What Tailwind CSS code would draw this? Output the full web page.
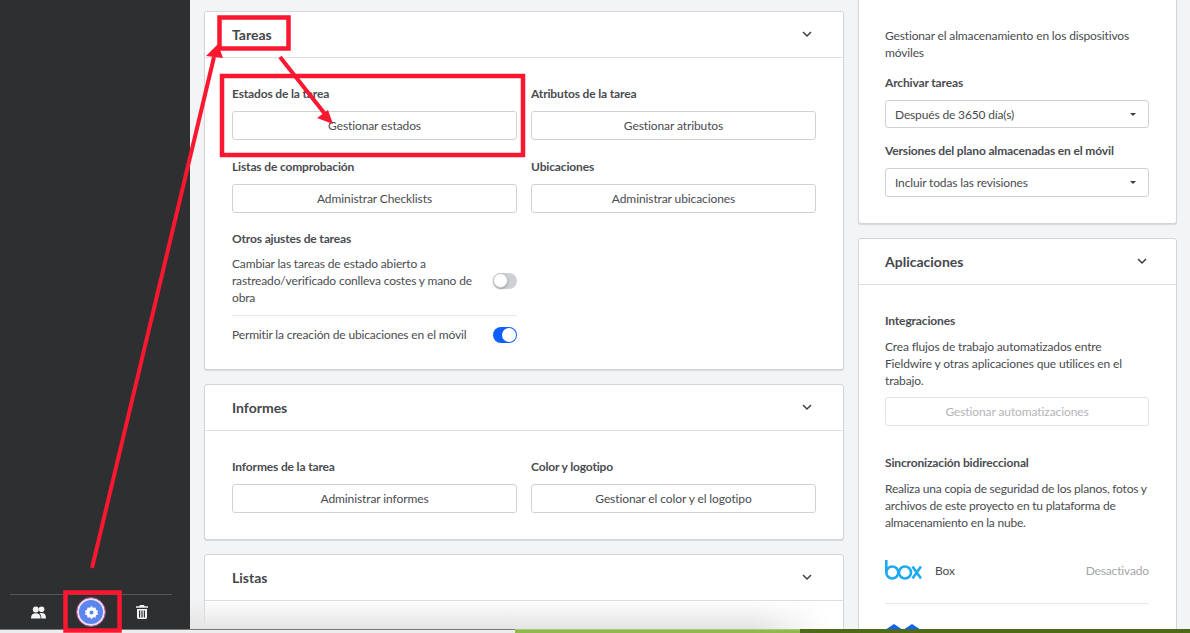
<!DOCTYPE html>
<html lang="en">
<head>
    <meta charset="UTF-8">
    <meta name="viewport" content="width=device-width, initial-scale=1.0">
    <title>Ajustes del proyecto</title>
    <script src="https://cdn.jsdelivr.net/npm/@tailwindcss/browser@4"></script>
</head>
<body class="relative w-[1190px] h-[633px] overflow-hidden bg-[#f3f4f6] font-['Lato',sans-serif] text-[12px] leading-[17px] tracking-[-0.15px] text-[#4a4c50]">
    <div class="flex h-[633px]">
        <!-- Sidebar -->
        <aside class="w-[190px] h-full shrink-0 bg-[#2e2f31] flex flex-col justify-end pl-[10px] pr-[18px] pb-[4px]">
            <div class="border-t border-[#55575a] h-[35px] flex items-center text-white">
                <div class="w-[56px] flex justify-center">
                    <svg class="w-[15px] h-[13px]" viewBox="0 0 15 13" fill="#f4f4f4"><circle cx="4.800" cy="3.600" r="3"/><circle cx="10.600" cy="3.200" r="2.800"/><path d="M0 12.500c0-3.600 1.600-5.200 4.800-5.200s4.800 1.600 4.800 5.200z"/><path d="M10.400 12.500c0-2.200-.5-3.900-1.800-5 .6-.3 1.300-.4 2-.4 3 0 4.400 1.800 4.400 5.400z"/></svg>
                </div>
                <div class="w-[28px] h-[28px] ml-[11px] rounded-full bg-[#5b86ee] border-2 border-[#e6e4f2] outline outline-1 outline-[#c04a98] flex items-center justify-center">
                    <svg class="w-[15px] h-[15px]" viewBox="0 0 24 24" fill="#fff"><path d="M12 1l2.200 3.400 4-.6 1 3.900 3.600 1.700L21 12l1.800 2.600-3.600 1.700-1 3.900-4-.6L12 23l-2.200-3.400-4 .6-1-3.900-3.600-1.700L3 12 1.200 9.400l3.600-1.700 1-3.900 4 .6z"/><circle cx="12" cy="12" r="3.200" fill="#5b86ee"/></svg>
                </div>
                <div class="ml-[31px]">
                    <svg class="w-[12px] h-[14px]" viewBox="0 0 12 14" fill="#f4f4f4"><path d="M4 0h4l.6 1.200H12v1.600H0V1.200h3.400z"/><path d="M1 4h10v8.600c0 .8-.6 1.400-1.400 1.400H2.400C1.600 14 1 13.400 1 12.600zM3 5.500v7h1.200v-7zm2.400 0v7h1.200v-7zm2.400 0v7H9v-7z" fill-rule="evenodd"/></svg>
                </div>
            </div>
        </aside>

        <!-- Left column -->
        <main class="w-[640px] ml-[14px] pt-[11px] flex flex-col gap-[14px] shrink-0">
            <section class="h-[359px] shrink-0 bg-white border border-[#d3d5d8] rounded-[3px] shadow-[0_1px_1px_rgba(0,0,0,0.12)]">
                <header class="h-[46px] px-[27px] border-b border-[#dcdee0] flex items-center justify-between">
                    <h2 class="text-[14px] font-bold tracking-normal text-[#45474b]">Tareas</h2>
                    <svg class="w-[10px] h-[7px] mr-[4px]" viewBox="0 0 10 7" fill="none" stroke="#3c3e42" stroke-width="1.500"><path d="M1 1l4 4 4-4"/></svg>
                </header>
                <div class="px-[27px] pt-[27px]">
                    <div class="grid grid-cols-[285px_285px] gap-x-[14px] gap-y-[18px]">
                        <div>
                            <p class="font-bold mb-[9px]">Estados de la tarea</p>
                            <button class="w-full h-[29px] border border-[#cfd1d4] rounded-[3px] bg-white tracking-[-0.1px]">Gestionar estados</button>
                        </div>
                        <div>
                            <p class="font-bold mb-[9px]">Atributos de la tarea</p>
                            <button class="w-full h-[29px] border border-[#cfd1d4] rounded-[3px] bg-white tracking-[-0.1px]">Gestionar atributos</button>
                        </div>
                        <div>
                            <p class="font-bold mb-[9px]">Listas de comprobación</p>
                            <button class="w-full h-[29px] border border-[#cfd1d4] rounded-[3px] bg-white tracking-[-0.1px]">Administrar Checklists</button>
                        </div>
                        <div>
                            <p class="font-bold mb-[9px]">Ubicaciones</p>
                            <button class="w-full h-[29px] border border-[#cfd1d4] rounded-[3px] bg-white tracking-[-0.1px]">Administrar ubicaciones</button>
                        </div>
                    </div>
                    <div class="w-[285px] mt-[17px]">
                        <p class="font-bold mb-[8px]">Otros ajustes de tareas</p>
                        <div class="flex items-center justify-between pb-[9px] border-b border-[#e6e7e9]">
                            <p class="w-[245px]">Cambiar las tareas de estado abierto a rastreado/verificado conlleva costes y mano de obra</p>
                            <span class="w-[24px] h-[16px] rounded-full bg-[#cfd0d3] relative">
                                <span class="absolute left-0 top-0 w-[15px] h-[15px] rounded-full bg-white border border-[#c4c5c8] shadow-[0_1px_2px_rgba(0,0,0,0.25)]"></span>
                            </span>
                        </div>
                        <div class="flex items-center justify-between pt-[10px]">
                            <p>Permitir la creación de ubicaciones en el móvil</p>
                            <span class="w-[24px] h-[16px] rounded-full bg-[#0f5fff] relative">
                                <span class="absolute right-[1px] top-[1px] w-[14px] h-[14px] rounded-full bg-white"></span>
                            </span>
                        </div>
                    </div>
                </div>
            </section>

            <section class="h-[156px] shrink-0 bg-white border border-[#d3d5d8] rounded-[3px] shadow-[0_1px_1px_rgba(0,0,0,0.12)]">
                <header class="h-[46px] px-[27px] border-b border-[#dcdee0] flex items-center justify-between">
                    <h2 class="text-[14px] font-bold tracking-normal text-[#45474b]">Informes</h2>
                    <svg class="w-[10px] h-[7px] mr-[4px]" viewBox="0 0 10 7" fill="none" stroke="#3c3e42" stroke-width="1.500"><path d="M1 1l4 4 4-4"/></svg>
                </header>
                <div class="px-[27px] pt-[27px] grid grid-cols-[285px_285px] gap-x-[14px]">
                    <div>
                        <p class="font-bold mb-[9px]">Informes de la tarea</p>
                        <button class="w-full h-[29px] border border-[#cfd1d4] rounded-[3px] bg-white tracking-[-0.1px]">Administrar informes</button>
                    </div>
                    <div>
                        <p class="font-bold mb-[9px]">Color y logotipo</p>
                        <button class="w-full h-[29px] border border-[#cfd1d4] rounded-[3px] bg-white tracking-[-0.1px]">Gestionar el color y el logotipo</button>
                    </div>
                </div>
            </section>

            <section class="h-[100px] shrink-0 bg-white border border-[#d3d5d8] rounded-[3px]">
                <header class="h-[46px] px-[27px] border-b border-[#dcdee0] flex items-center justify-between">
                    <h2 class="text-[14px] font-bold tracking-normal text-[#45474b]">Listas</h2>
                    <svg class="w-[10px] h-[7px] mr-[4px]" viewBox="0 0 10 7" fill="none" stroke="#3c3e42" stroke-width="1.500"><path d="M1 1l4 4 4-4"/></svg>
                </header>
            </section>
        </main>

        <!-- Right column -->
        <div class="w-[319px] ml-[14px] flex flex-col gap-[14px] shrink-0">
            <section class="h-[224px] shrink-0 bg-white border border-t-0 border-[#d3d5d8] rounded-b-[3px] shadow-[0_1px_1px_rgba(0,0,0,0.12)] px-[26px] pt-[27px]">
                <p class="w-[264px]">Gestionar el almacenamiento en los dispositivos móviles</p>
                <p class="font-bold mt-[13px] mb-[9px]">Archivar tareas</p>
                <div class="w-[264px] h-[28px] border border-[#cfd1d4] rounded-[3px] flex items-center justify-between pl-[9px] pr-[12px]">
                    <span>Después de 3650 día(s)</span>
                    <span class="border-x-[3px] border-x-transparent border-t-[3px] border-t-[#3c3e42]"></span>
                </div>
                <p class="font-bold mt-[14px] mb-[9px]">Versiones del plano almacenadas en el móvil</p>
                <div class="w-[264px] h-[29px] border border-[#cfd1d4] rounded-[3px] flex items-center justify-between pl-[9px] pr-[12px]">
                    <span>Incluir todas las revisiones</span>
                    <span class="border-x-[3px] border-x-transparent border-t-[3px] border-t-[#3c3e42]"></span>
                </div>
            </section>

            <section class="h-[420px] shrink-0 bg-white border border-[#d3d5d8] rounded-[3px]">
                <header class="h-[46px] px-[26px] border-b border-[#dcdee0] flex items-center justify-between">
                    <h2 class="text-[14px] font-bold tracking-normal text-[#45474b]">Aplicaciones</h2>
                    <svg class="w-[10px] h-[7px] mr-[3px]" viewBox="0 0 10 7" fill="none" stroke="#3c3e42" stroke-width="1.500"><path d="M1 1l4 4 4-4"/></svg>
                </header>
                <div class="px-[26px] pt-[27px] w-[316px]">
                    <p class="font-bold mb-[9px]">Integraciones</p>
                    <p>Crea flujos de trabajo automatizados entre Fieldwire y otras aplicaciones que utilices en el trabajo.</p>
                    <button class="w-full h-[29px] mt-[8px] border border-[#e2e3e5] rounded-[3px] text-[#b3b5b8] tracking-[-0.1px]">Gestionar automatizaciones</button>
                    <p class="font-bold mt-[28px] mb-[9px]">Sincronización bidireccional</p>
                    <p class="tracking-[-0.22px]">Realiza una copia de seguridad de los planos, fotos y archivos de este proyecto en tu plataforma de almacenamiento en la nube.</p>
                    <div class="flex items-center h-[36px] mt-[21px]">
                        <svg class="w-[37px] h-[20px]" viewBox="0 0 37 20" fill="none" stroke="#1eaaf1" stroke-width="2.600"><path d="M1.300 0v12.500"/><circle cx="7.300" cy="12.500" r="6"/><circle cx="20" cy="12.500" r="6"/><path d="M27.500 6.500l8.500 12M36 6.500l-8.500 12"/></svg>
                        <span class="ml-[13px]">Box</span>
                        <span class="ml-auto text-[#a3a5a8]">Desactivado</span>
                    </div>
                    <div class="border-t border-[#e6e7e9] mt-[15px] pt-[20px]">
                        <svg class="w-[36px] h-[20px]" viewBox="0 0 36 20" fill="#0f62fe"><path d="M9 0l9 6-9 6-9-6zM27 0l9 6-9 6-9-6z"/></svg>
                    </div>
                </div>
            </section>
        </div>
    </div>

    <!-- Fade and desktop strip at the bottom of the capture -->
    <div class="absolute left-[190px] bottom-[4px] w-[640px] h-[30px] bg-gradient-to-b from-transparent to-[#e4e4e4] [mask-image:linear-gradient(90deg,#000_88%,transparent)]"></div>
    <div class="absolute left-0 bottom-0 w-full h-[4px] flex">
        <div class="w-[515px] border-t border-[#77797b] bg-[#ededed]"></div>
        <div class="w-[285px] border-t border-[#a9cc6e] bg-[#8fb94e]"></div>
        <div class="flex-1 bg-[#4c6a17]"></div>
    </div>

    <!-- Red annotations -->
    <svg class="absolute inset-0 w-[1190px] h-[633px] pointer-events-none" viewBox="0 0 1190 633" fill="none">
        <rect x="65.500" y="592.500" width="54" height="38" stroke="#f9182f" stroke-width="4.500"/>
        <rect x="219.500" y="17.500" width="69" height="31" stroke="#f9182f" stroke-width="4.500"/>
        <rect x="222" y="76" width="301" height="79" stroke="#f9182f" stroke-width="4.500"/>
        <path d="M92 568L214 57" stroke="#f9182f" stroke-width="4"/>
        <path d="M206 56L223 58L218 44z" fill="#f9182f"/>
        <path d="M280 57L325 114" stroke="#f9182f" stroke-width="4"/>
        <path d="M317 118L328 110L333 124z" fill="#f9182f"/>
    </svg>
</body>
</html>
